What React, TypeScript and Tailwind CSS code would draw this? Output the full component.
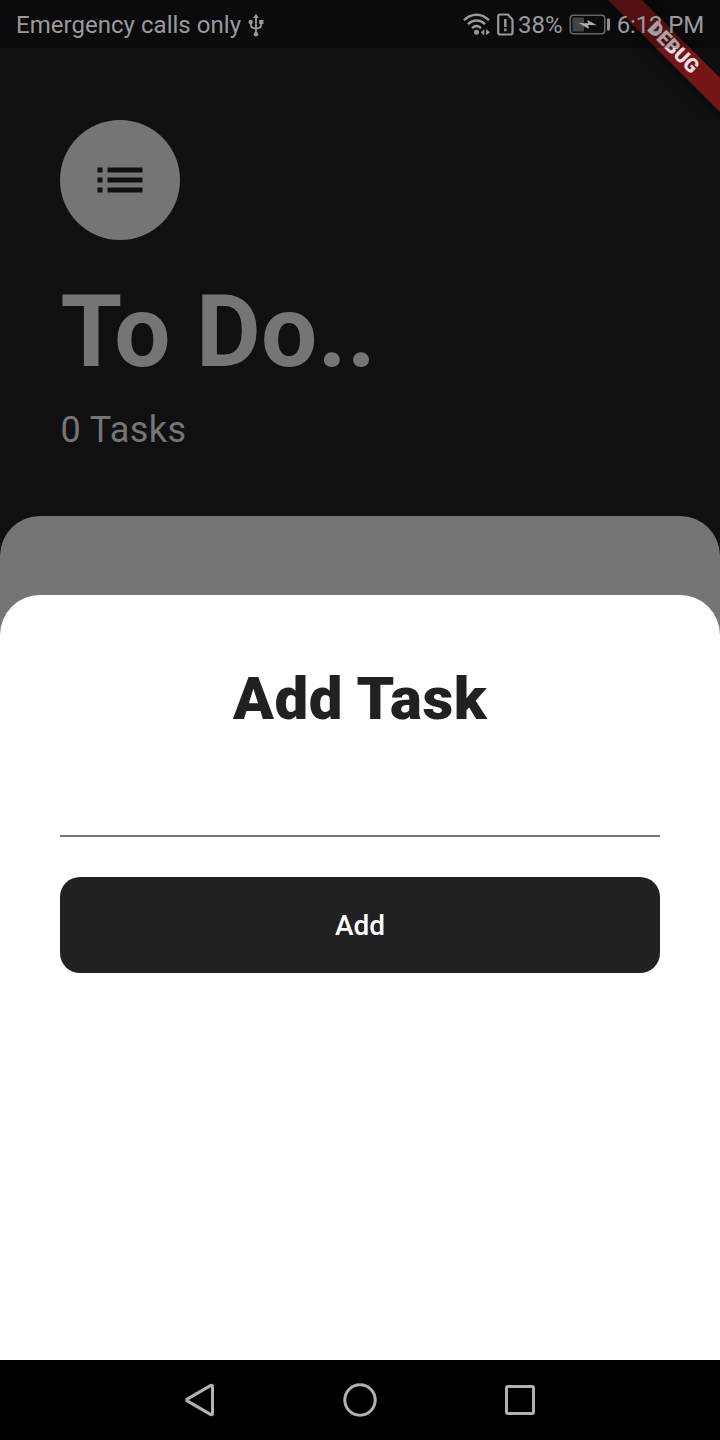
import React from "react";

function UsbIcon() {
  return (
    <svg className="h-6 w-4 shrink-0" viewBox="0 0 16 24" fill="none" stroke="#9a9a9a" strokeWidth="1.8">
      <path d="M8 3v18M2.800 9v2.500c0 3 2 4 5.200 4s5.200-1 5.200-4V9" />
      <path d="M8 .8 10.800 5H5.200Z" fill="#9a9a9a" stroke="none" />
      <circle cx="2.700" cy="9" r="2.200" fill="#9a9a9a" stroke="none" />
      <path d="M11.200 7h4.200v4h-4.200z" fill="#9a9a9a" stroke="none" />
      <circle cx="8" cy="21.300" r="2.200" fill="#9a9a9a" stroke="none" />
    </svg>
  );
}

function WifiIcon() {
  return (
    <svg className="h-6 w-7 shrink-0" viewBox="0 0 28 24" fill="none" stroke="#9a9a9a" strokeWidth="2.400">
      <path d="M1 7.300C8-.2 19-.2 26 7.300M5 11.200c5-5 12-5 17 0M9 15.200c2.900-2.700 6.100-2.700 9 0" />
      <circle cx="13.500" cy="19.300" r="2.500" fill="#9a9a9a" stroke="none" />
      <path d="M21.300 16.200v6l-3.600-3zM23 16.200v6l4-3z" fill="#9a9a9a" stroke="none" />
    </svg>
  );
}

function SimAlertIcon() {
  return (
    <svg className="h-6 w-[18px] shrink-0" viewBox="0 0 18 24" fill="none" stroke="#9a9a9a" strokeWidth="2.200">
      <path d="M3.200 1.500h7.800l4.500 5.100v12.900a2 2 0 0 1-2 2H3.200a2 2 0 0 1-2-2v-16a2 2 0 0 1 2-2Z" />
      <path d="M8.300 6v8M8.300 15.500v2.700" strokeWidth="2.400" />
    </svg>
  );
}

function BatteryIcon() {
  return (
    <svg className="h-6 w-[42px] shrink-0" viewBox="0 0 42 24" fill="none">
      <rect x="1.300" y="2.300" width="34.500" height="18.400" rx="3" stroke="#656565" strokeWidth="1.600" />
      <path d="M3.500 4.500H15v14H3.500z" fill="#454547" />
      <path d="m9.500 10 9.500.2-.6-3.200L28 12.200l-8.700-.2.500 4z" fill="#ababab" />
      <rect x="38" y="5.500" width="3" height="12" rx=".8" fill="#929292" />
    </svg>
  );
}

function DebugBanner() {
  return (
    <div className="absolute right-0 top-0 h-[120px] w-[120px] overflow-hidden">
      <div className="absolute -left-[27px] top-[36px] flex h-6 w-[200px] rotate-45 items-center justify-center bg-[#741518] shadow-[0_0_12px_rgba(0,0,0,0.5)]">
        <span className="text-[19.8px] font-black leading-6 text-[#e8e0e0]">DEBUG</span>
      </div>
    </div>
  );
}

function StatusBar() {
  return (
    <div className="absolute inset-x-0 top-0 flex h-12 items-center bg-black/27 pl-4 pr-4 pt-px text-[24px] leading-6 text-[#9a9a9a]">
      <span className="whitespace-nowrap tracking-[0.03px]">Emergency calls only</span>
      <span className="ml-[7px] flex"><UsbIcon /></span>
      <div className="ml-auto flex items-center whitespace-nowrap">
        <WifiIcon />
        <span className="ml-[6px] flex"><SimAlertIcon /></span>
        <span className="ml-[3px]">38%</span>
        <span className="ml-[6px] flex"><BatteryIcon /></span>
        <span className="ml-[6px] tracking-[-0.14px]">6:12 PM</span>
      </div>
    </div>
  );
}

function NavigationBar() {
  return (
    <nav className="flex h-20 items-center justify-center gap-[120px] bg-black">
      {[
        <path key="back" d="M32.500 6.200v27.600a1.100 1.100 0 0 1-1.600.8L7.200 20.900a1.100 1.100 0 0 1 0-1.800L30.900 5.400a1.100 1.100 0 0 1 1.600.8Z" />,
        <circle key="home" cx="20" cy="20" r="15.200" />,
        <rect key="recent" x="6.500" y="6.500" width="27" height="27" rx="1.500" />,
      ].map((shape, i) => (
        <button key={i} className="h-10 w-10">
          <svg viewBox="0 0 40 40" className="h-10 w-10" fill="none" stroke="#b2b2b2" strokeWidth="3" strokeLinejoin="round">
            {shape}
          </svg>
        </button>
      ))}
    </nav>
  );
}

export default function App() {
  return (
    <div className="relative flex h-[1440px] w-[720px] flex-col overflow-hidden bg-[#101012] font-['Roboto',sans-serif]">
      <header className="h-[516px] shrink-0 px-[60px] pt-[120px] text-[#757575]">
        <div className="flex h-[120px] w-[120px] items-center justify-center rounded-full bg-[#757575]">
          <svg className="h-[26px] w-[46px]" viewBox="0 0 46 26" fill="#101012">
            <path d="M.5 .5h5v5h-5zM10.500 .5h35v5h-35zM.5 10.500h5v5h-5zM10.500 10.500h35v5h-35zM.5 20.500h5v5h-5zM10.500 20.500h35v5h-35z" />
          </svg>
        </div>
        <h1 className="mt-[34px] pl-[0.5px] text-[99.6px] font-bold leading-[117px] tracking-[0.4px]">To Do..</h1>
        <p className="mt-[18px] pl-[0.5px] text-[36px] leading-[42px] tracking-[0.45px]">0 Tasks</p>
      </header>
      <div className="flex flex-1 flex-col rounded-t-[40px] bg-[#757575] pt-[79px]">
        <main className="flex-1 rounded-t-[40px] bg-white px-[60px] pt-[69px]">
          <h2 className="text-center text-[60px] font-black leading-[70px] tracking-[0.5px] text-[#212123]">Add Task</h2>
          <div className="mt-[31px] h-[72px] border-b-2 border-[#757575]" />
          <button className="mt-10 flex h-24 w-full items-center justify-center rounded-[20px] bg-[#212123] pt-[2px] text-[28px] font-medium text-white">Add</button>
        </main>
      </div>
      <NavigationBar />
      <DebugBanner />
      <StatusBar />
    </div>
  );
}
